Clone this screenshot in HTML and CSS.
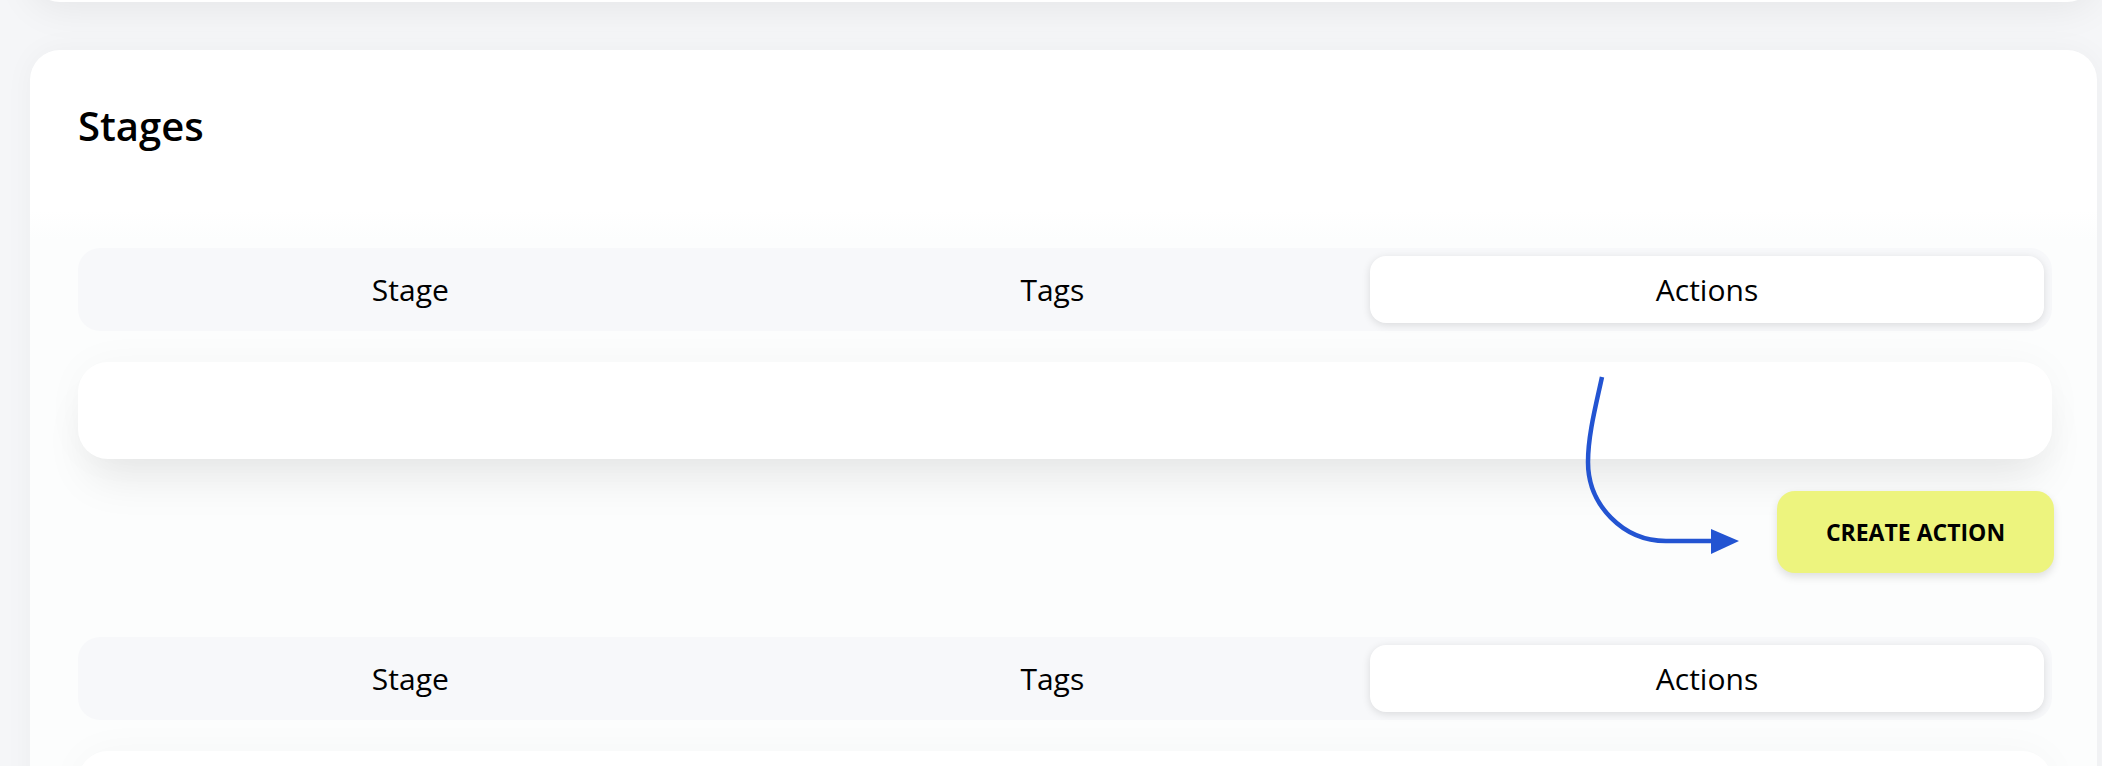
FILE: index.html
```html
<!doctype html>
<html lang="en">
<head>
    <meta charset="UTF-8">
    <meta name="viewport" content="width=device-width, initial-scale=1.0">
    <title>Stages</title>
    <link rel="stylesheet" href="styles.css">
</head>
<body>
    <div id="page">
        <div class="card card-top"></div>

        <div class="card">
            <div class="card-head">
                <h2>Stages</h2>
            </div>

            <div class="stages">
                <div class="stage">
                    <ul class="tabs">
                        <li>Stage</li>
                        <li>Tags</li>
                        <li class="selected">Actions</li>
                    </ul>
                    <div class="stage-body"></div>
                    <div class="stage-foot">
                        <button class="btn-create">CREATE ACTION</button>
                    </div>
                    <svg class="hint" width="170" height="195" viewBox="0 0 170 195">
                        <path d="M28 10 C22 38 14 68 14 95 C14 138 49 174 92 174 L140 174" fill="none" stroke="#2354d2" stroke-width="4.5"/>
                        <polygon points="137,162 137,187 165,174" fill="#2354d2"/>
                    </svg>
                </div>

                <div class="stage">
                    <ul class="tabs">
                        <li>Stage</li>
                        <li>Tags</li>
                        <li class="selected">Actions</li>
                    </ul>
                    <div class="stage-body"></div>
                </div>
            </div>
        </div>
    </div>
</body>
</html>
```

FILE: styles.css
```css
body{
    margin: 0;
    height: 766px;
    overflow: hidden;
    background-color: #f5f6f8;
    font-family: "Open Sans", "Noto Sans", sans-serif;
    color: #000;
}
#page{
    padding: 0 5px 0 30px;
}
.card{
    background-color: #fff;
    border-radius: 30px;
    overflow: hidden;
    box-shadow: 0 0 30px rgba(0,0,0,0.04);
}
.card-top{
    height: 100px;
    margin-top: -98px;
    margin-bottom: 48px;
    box-shadow: 0 6px 40px rgba(0,0,0,0.07);
}
.card-head{
    padding: 52px 48px 0;
}
.card-head h2{
    margin: 0;
    font-size: 40px;
    font-weight: 600;
    line-height: 48px;
}
.stages{
    margin-top: 60px;
    padding: 38px 45px 0 48px;
    background: linear-gradient(#fff, #fcfdfd 30px);
}
.stage{
    position: relative;
    margin-bottom: 64px;
}
.tabs{
    display: flex;
    margin: 0;
    padding: 8px;
    list-style: none;
    background-color: #f7f8fa;
    border-radius: 22px;
}
.tabs li{
    flex: 1 1 auto;
    height: 67px;
    line-height: 67px;
    text-align: center;
    font-size: 30px;
    border-radius: 16px;
}
.tabs .selected{
    background-color: #fff;
    box-shadow: 0 2px 8px rgba(0,0,0,0.12);
}
.stage-body{
    height: 97px;
    margin-top: 31px;
    background-color: #fff;
    border-radius: 30px;
    box-shadow: 0 30px 45px -10px rgba(0,0,0,0.08), 0 0 40px rgba(0,0,0,0.03);
}
.stage-foot{
    display: flex;
    justify-content: flex-end;
    margin-top: 32px;
}
.btn-create{
    width: 277px;
    height: 82px;
    margin-right: -2px;
    border: none;
    border-radius: 18px;
    background-color: #edf47e;
    box-shadow: 0 4px 8px rgba(0,0,0,0.12);
    font-family: "Open Sans", "Noto Sans", sans-serif;
    font-size: 23px;
    font-weight: 700;
    color: #000;
}
.hint{
    position: absolute;
    left: 1496px;
    top: 119px;
}
```
